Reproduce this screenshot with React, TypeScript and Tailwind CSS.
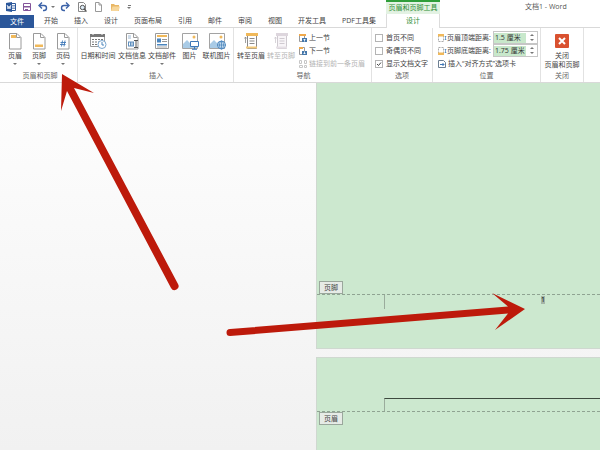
import type { ReactNode } from 'react';

const tabs = ['开始', '插入', '设计', '页面布局', '引用', '邮件', '审阅', '视图', '开发工具', 'PDF工具集'];

type IconProps = { children: ReactNode; w?: number; h?: number };

function Icon({ children, w = 18, h = 18 }: IconProps) {
  return (
    <svg width={w} height={h} viewBox={`0 0 ${w} ${h}`} fill="none" className="shrink-0" aria-hidden="true">
      {children}
    </svg>
  );
}

function Sheet({ color = '#9a9a9a' }: { color?: string }) {
  return (
    <>
      <path d="M3.500 1.500h7.500l4 4v11.500h-11.500z" fill="#fff" stroke={color} />
      <path d="M10.500 1.500v4h4" stroke={color} />
    </>
  );
}

const HeaderIcon = () => (
  <Icon>
    <Sheet />
    <path d="M5 3h5v3H5z" fill="#f0b95b" />
  </Icon>
);

const FooterIcon = () => (
  <Icon>
    <Sheet />
    <path d="M5 12.500h8v2.500H5z" fill="#f0b95b" />
  </Icon>
);

const PageNumberIcon = () => (
  <Icon>
    <Sheet />
    <path d="M8.500 8.500l-1 6M11 8.500l-1 6M6.500 10.500h5.500M6 12.500h5.500" stroke="#3f78b8" strokeWidth="0.9" />
  </Icon>
);

const DateIcon = () => (
  <Icon>
    <path d="M1.500 2.500h14v12h-14z" fill="#fff" stroke="#9a9a9a" />
    <path d="M1 2h15v3H1z" fill="#777" />
    <path d="M4 1v2M13 1v2" stroke="#fff" />
    <path d="M3 7.500h11M3 10h8M3 12.500h6" stroke="#777" strokeWidth="1.200" strokeDasharray="2 1" />
    <circle cx="13" cy="12.500" r="4" fill="#fff" stroke="#7ba7d0" />
    <path d="M13 10v3h2" stroke="#4a85bd" />
  </Icon>
);

const DocInfoIcon = () => (
  <Icon>
    <Sheet />
    <path d="M5 4h3M5 6h3" stroke="#9cb7d2" />
    <path d="M5 9.500h6v5H5z" fill="#5f8fbe" />
    <path d="M6.500 10.500v3M9 10.500v3" stroke="#fff" />
    <path d="M11 8.500h4M11 15.500h4M13 8.500v7" stroke="#555" />
  </Icon>
);

const DocPartsIcon = () => (
  <Icon>
    <path d="M2.500 1.500h13v15h-13z" fill="#fff" stroke="#9a9a9a" />
    <path d="M4 3h10v2H4z" fill="#f0b95b" />
    <path d="M4 6.500h4v4H4z" fill="#4a85bd" />
    <path d="M9 7.500h5M9 9.500h5" stroke="#999" />
    <path d="M4 12h10v1.500H4z" fill="#4a85bd" />
    <path d="M4 15h10" stroke="#aaa" />
  </Icon>
);

const PictureBase = () => (
  <>
    <path d="M1.500 1.500h15v15h-15z" fill="#fff" stroke="#a3a3a3" />
    <circle cx="13" cy="5" r="1.500" fill="#f0b95b" />
    <path d="M2 16v-4l4-4 3 3 3-2 4 4v3z" fill="#a9cbe6" />
  </>
);

const PictureIcon = () => (
  <Icon>
    <PictureBase />
    <path d="M9.500 9.500h8v5h-8z" fill="#fff" stroke="#3f78b8" />
    <path d="M13.500 15v2M11 17.300h5" stroke="#3f78b8" />
  </Icon>
);

const OnlinePictureIcon = () => (
  <Icon>
    <PictureBase />
    <circle cx="13.500" cy="13" r="4" fill="#dcebf6" stroke="#4a85bd" />
    <path d="M9.500 13h8M13.500 9v8" stroke="#4a85bd" strokeWidth="0.8" />
    <ellipse cx="13.500" cy="13" rx="2" ry="4" stroke="#4a85bd" strokeWidth="0.8" />
  </Icon>
);

function GotoIcon({ muted = false }: { muted?: boolean }) {
  const ink = muted ? '#cfcad0' : '#8a8a8a';
  return (
    <Icon>
      <path d="M5.500 2.500h9v14h-9z" fill={muted ? '#f8f5f8' : '#fff'} stroke={ink} />
      <path d="M4 1h12v3H4z" fill={muted ? '#ddd6dd' : '#f0b95b'} />
      <path d="M7.500 6.500h5M7.500 9h5M7.500 11.500h5" stroke={ink} />
      <path d="M4 14.500h11v2H4z" fill={muted ? '#e6e0e6' : '#f3c878'} />
      <path d="M3.500 5v6M2.500 6.500l1-1.500 1 1.500" stroke={ink} strokeWidth="0.8" />
    </Icon>
  );
}

function SectionIcon({ down = false }: { down?: boolean }) {
  return (
    <Icon w={10} h={10}>
      <path d="M1.500 1.500h5v7h-5z" fill="#fff" stroke="#999" />
      <path d={down ? 'M1 1h4v2H1z' : 'M1 1h7v2H1z'} fill="#f0a94b" />
      <path d="M4 5h5v4H4z" fill="#4577aa" />
      <path d={down ? 'M6.500 5.500v2.500M5.500 7l1 1 1-1' : 'M6.500 8.500V6M5.500 7l1-1 1 1'} stroke="#fff" strokeWidth="0.8" />
    </Icon>
  );
}

const LinkIcon = () => (
  <Icon w={10} h={10}>
    <path d="M1.500 1.500h2v3h-2zM6.500 1.500h2v3h-2zM1.500 6.500h3v2h-3zM6.500 6.500h2v2h-2z" stroke="#c6c6c6" />
  </Icon>
);

function DistanceIcon({ bottom = false }: { bottom?: boolean }) {
  return (
    <Icon w={10} h={10}>
      <path d="M1.500 1.500h5v7h-5z" fill="#fff" stroke="#aaa" strokeDasharray="2 1" />
      <path d={bottom ? 'M1 6.500h6V9H1z' : 'M1 1h6v2.500H1z'} fill="#f0b95b" />
      <path d="M8.500 3v4M7.800 4l.7-1 .7 1M7.800 6l.7 1 .7-1" stroke="#4a85bd" strokeWidth="0.7" />
    </Icon>
  );
}

const AlignTabIcon = () => (
  <Icon w={10} h={10}>
    <path d="M1.500 1.500h5l2 2v5h-7z" fill="#fff" stroke="#6d7f92" />
    <path d="M3 5.500h4M5.500 4L7 5.500 5.500 7" stroke="#3f78b8" />
  </Icon>
);

const Caret = () => (
  <svg width="4" height="2" viewBox="0 0 4 2" aria-hidden="true">
    <path d="M0 0h4L2 2z" fill="#777" />
  </svg>
);

type BigButtonProps = { icon: ReactNode; label: string; width: string; menu?: boolean; muted?: boolean };

function BigButton({ icon, label, width, menu, muted }: BigButtonProps) {
  return (
    <button
      type="button"
      disabled={muted}
      className={`flex shrink-0 flex-col items-center pt-1 whitespace-nowrap ${width} ${muted ? 'text-[#b4b4b4]' : ''}`}
    >
      {icon}
      <span className="mt-px h-2.5">{label}</span>
      {menu && (
        <span className="mt-0.5">
          <Caret />
        </span>
      )}
    </button>
  );
}

function Group({ name, width, children }: { name: string; width: string; children: ReactNode }) {
  return (
    <section aria-label={name} className={`flex shrink-0 flex-col border-r border-[#e2e2e2] ${width}`}>
      <div className="flex h-[43px]">{children}</div>
      <div className="text-center text-[#666]">{name}</div>
    </section>
  );
}

function SmallRow({ icon, label, muted }: { icon: ReactNode; label: string; muted?: boolean }) {
  return (
    <button
      type="button"
      disabled={muted}
      className={`flex h-[13px] items-center gap-px whitespace-nowrap ${muted ? 'text-[#b4b4b4]' : ''}`}
    >
      {icon}
      <span>{label}</span>
    </button>
  );
}

function Check({ label, checked }: { label: string; checked?: boolean }) {
  return (
    <label className="flex h-[13px] items-center gap-[3px] whitespace-nowrap">
      <span className="grid">
        <input
          type="checkbox"
          defaultChecked={checked}
          className="peer col-start-1 row-start-1 size-2 appearance-none border border-[#b4b4b4] bg-white"
        />
        <svg viewBox="0 0 8 8" className="pointer-events-none invisible col-start-1 row-start-1 size-2 peer-checked:visible" fill="none">
          <path d="M2 4l1.500 1.500L6 2.500" stroke="#444" />
        </svg>
      </span>
      {label}
    </label>
  );
}

function Distance({ id, label, value, bottom }: { id: string; label: string; value: string; bottom?: boolean }) {
  return (
    <div className="flex h-[13px] items-center whitespace-nowrap">
      <DistanceIcon bottom={bottom} />
      <label htmlFor={id} className="w-[46px]">
        {label}
      </label>
      <div className="flex h-[13px] w-[45px] items-center border border-[#c6c6c6] bg-white">
        <input id={id} defaultValue={value} className="h-[10px] w-8 bg-[#c8e8cb] pl-px text-[#333]" />
        <span className="flex flex-1 flex-col items-center gap-[3px]">
          <button type="button" aria-label={`${label} +`} className="flex rotate-180">
            <Caret />
          </button>
          <button type="button" aria-label={`${label} -`} className="flex">
            <Caret />
          </button>
        </span>
      </div>
    </div>
  );
}

function QuickAccess() {
  return (
    <div className="flex h-3.5 items-center pl-[5px]">
      <Icon w={12} h={12}>
        <path d="M5 2.500h5.500v7H5z" fill="#fff" stroke="#2b579a" />
        <path d="M7 4.500h3M7 6h3M7 7.500h3" stroke="#2b579a" strokeWidth="0.6" />
        <path d="M1 2l6-1v10l-6-1z" fill="#2b579a" />
        <path d="M2.200 4l.8 4L4 5l1 3 .8-4" stroke="#fff" strokeWidth="0.8" />
      </Icon>
      <button type="button" aria-label="保存" className="ml-1 flex">
        <Icon w={12} h={12}>
          <path d="M2.500 2.500h7v7h-7z" fill="#fff" stroke="#84559a" />
          <path d="M2 5h8v1.500H2zM4 8h3v2H4z" fill="#84559a" />
        </Icon>
      </button>
      <button type="button" aria-label="撤消" className="ml-1 flex items-center gap-0.5">
        <Icon w={12} h={12}>
          <path d="M3 4.500h4a2.300 2.300 0 010 5H6" stroke="#3b62a8" strokeWidth="1.400" />
          <path d="M5 1.500L2 4.500l3 3" stroke="#3b62a8" strokeWidth="1.400" />
        </Icon>
        <Caret />
      </button>
      <button type="button" aria-label="恢复" className="ml-1 flex">
        <Icon w={12} h={12}>
          <path d="M9 4.500H5a2.300 2.300 0 000 5h1" stroke="#3b62a8" strokeWidth="1.400" />
          <path d="M7 1.500l3 3-3 3" stroke="#3b62a8" strokeWidth="1.400" />
        </Icon>
      </button>
      <button type="button" aria-label="打印预览" className="ml-[5px] flex">
        <Icon w={12} h={12}>
          <path d="M2.500 1.500h5l2 2v7h-7z" fill="#fff" stroke="#888" />
          <circle cx="6.500" cy="6.500" r="2.200" fill="#dcebf6" stroke="#555" />
          <path d="M8 8l2.500 2.500" stroke="#555" strokeWidth="1.300" />
        </Icon>
      </button>
      <button type="button" aria-label="新建" className="ml-1 flex">
        <Icon w={12} h={12}>
          <path d="M3.500 1.500h3.500l2.500 2.500v6.500h-6zM7 1.500V4h2.500" fill="#fff" stroke="#999" />
        </Icon>
      </button>
      <button type="button" aria-label="打开" className="ml-[5px] flex">
        <Icon w={12} h={12}>
          <path d="M2 3h3l1 1h4v6H2z" fill="#e9b765" />
          <path d="M3.500 5.500H11L9.500 10H2z" fill="#f7d79b" />
        </Icon>
      </button>
      <button type="button" aria-label="自定义快速访问工具栏" className="ml-1.5 flex flex-col items-center gap-px">
        <span className="h-px w-[3px] bg-[#777]" />
        <Caret />
      </button>
    </div>
  );
}

function Header() {
  return (
    <header className="flex h-7">
      <div className="w-[386px] shrink-0">
        <QuickAccess />
        <nav className="flex h-3.5 items-end border-b border-[#d9d9d9]">
          <button type="button" className="-mb-px mr-0.5 h-[13px] w-[34px] bg-[#2b579a] text-white">
            文件
          </button>
          {tabs.map((t) => (
            <button key={t} type="button" className="h-[13px] px-2 whitespace-nowrap">
              {t}
            </button>
          ))}
        </nav>
      </div>
      <div className="flex w-[54px] shrink-0 flex-col border-x border-[#dcdcdc] text-center">
        <div className="-mx-px h-3.5 border-t-2 border-[#2f9e3a] bg-[#e3f2e3] whitespace-nowrap text-[#2f8f35]">
          <span className="leading-[11px]">页眉和页脚工具</span>
        </div>
        <button type="button" className="h-3.5 text-[#2f8f35]">
          设计
        </button>
      </div>
      <div className="flex-1 border-b border-[#d9d9d9] pt-0.5 pl-[85px] whitespace-nowrap text-[#555]">文档1 - Word</div>
    </header>
  );
}

function Ribbon() {
  return (
    <div className="flex h-[55px] border-b border-[#d9d9d9]">
      <Group name="页眉和页脚" width="w-[78px] pl-[3px]">
        <BigButton icon={<HeaderIcon />} label="页眉" width="w-6" menu />
        <BigButton icon={<FooterIcon />} label="页脚" width="w-6" menu />
        <BigButton icon={<PageNumberIcon />} label="页码" width="w-6" menu />
      </Group>
      <Group name="插入" width="w-[156px] pl-px">
        <BigButton icon={<DateIcon />} label="日期和时间" width="w-[38px]" />
        <BigButton icon={<DocInfoIcon />} label="文档信息" width="w-[30px]" menu />
        <BigButton icon={<DocPartsIcon />} label="文档部件" width="w-[30px]" menu />
        <BigButton icon={<PictureIcon />} label="图片" width="w-[25px]" />
        <BigButton icon={<OnlinePictureIcon />} label="联机图片" width="w-[29px]" />
      </Group>
      <Group name="导航" width="w-[138px] pl-0.5">
        <BigButton icon={<GotoIcon />} label="转至页眉" width="w-[30px]" />
        <BigButton icon={<GotoIcon muted />} label="转至页脚" width="w-[30px]" muted />
        <div className="ml-0.5 pt-[3px]">
          <SmallRow icon={<SectionIcon />} label="上一节" />
          <SmallRow icon={<SectionIcon down />} label="下一节" />
          <SmallRow icon={<LinkIcon />} label="链接到前一条页眉" muted />
        </div>
      </Group>
      <Group name="选项" width="w-[61px]">
        <div className="pt-[3px] pl-[3px]">
          <Check label="首页不同" />
          <Check label="奇偶页不同" />
          <Check label="显示文档文字" checked />
        </div>
      </Group>
      <Group name="位置" width="w-[108px]">
        <div className="pt-[3px] pl-1">
          <Distance id="header-distance" label="页眉顶端距离:" value="1.5 厘米" />
          <Distance id="footer-distance" label="页脚底端距离:" value="1.75 厘米" bottom />
          <SmallRow icon={<AlignTabIcon />} label="插入“对齐方式”选项卡" />
        </div>
      </Group>
      <Group name="关闭" width="w-[43px]">
        <button type="button" className="flex flex-1 flex-col items-center pt-1.5 leading-[9px] whitespace-nowrap">
          <Icon w={14} h={14}>
            <rect width="14" height="14" rx="1" fill="#d9512f" />
            <path d="M4 4l6 6M10 4l-6 6" stroke="#fff" strokeWidth="2" />
          </Icon>
          <span className="mt-[3px]">关闭</span>
          <span>页眉和页脚</span>
        </button>
      </Group>
    </div>
  );
}

function AreaTag({ children }: { children: string }) {
  return (
    <div className="ml-0.5 flex h-[13px] w-6 items-center justify-center border border-[#9aa79c] bg-[#e6ebe6] text-[#444]">
      {children}
    </div>
  );
}

function Document() {
  return (
    <main className="flex flex-1 flex-col bg-linear-to-b from-[#fefefe] to-[#f1f1f1] pl-[316px]">
      <article className="flex h-[266px] flex-col border-b border-l border-[#cfd8d0] bg-[#cce8cf]">
        <div className="flex flex-1 items-end">
          <AreaTag>页脚</AreaTag>
        </div>
        <div className="flex h-[54px] border-t border-dashed border-[#8fa392]">
          <div className="ml-[54px] h-3.5 w-3.5 border-r border-[#9aac9c]" />
          <div className="mt-px ml-[156px] h-2 w-1 bg-[#a5b5a8] leading-[8px] text-black">1</div>
        </div>
      </article>
      <article className="mt-2 flex flex-1 flex-col border-t border-l border-[#cfd8d0] bg-[#cce8cf]">
        <div className="flex h-[54px] items-end border-b border-dashed border-[#8fa392]">
          <div className="ml-[67px] h-[13px] flex-1 border-t border-l border-t-[#3d4a3f] border-l-[#9aac9c]" />
        </div>
        <AreaTag>页眉</AreaTag>
      </article>
    </main>
  );
}

export default function App() {
  return (
    <div className="relative flex min-h-screen flex-col overflow-hidden bg-white font-['Open_Sans','Noto_Sans_CJK_SC',sans-serif] text-[7px] leading-[10px] text-[#444]">
      <Header />
      <Ribbon />
      <Document />
      <svg
        width="600"
        height="450"
        viewBox="0 0 600 450"
        className="pointer-events-none absolute top-0 left-0"
        fill="#bd1a0b"
        aria-hidden="true"
      >
        <path d="M62 74L94 93L74 88L178 284A3.800 3.800 0 01171 288L67 91L61 111Z" />
        <path d="M525 309L492 293L508 306.500L230 329A3.500 3.500 0 00230 336L508 313.500L495 330Z" />
      </svg>
    </div>
  );
}
